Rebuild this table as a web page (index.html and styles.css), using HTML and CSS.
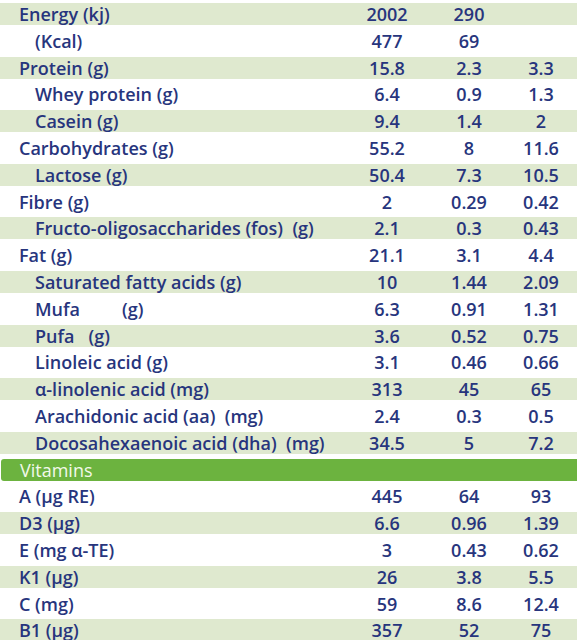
FILE: index.html
```html
<!DOCTYPE html>
<html lang="en">
<head>
    <meta charset="UTF-8">
    <meta name="viewport" content="width=device-width, initial-scale=1.0">
    <title>Nutrition facts</title>
    <link rel="stylesheet" href="styles.css">
</head>
<body>
    <div class="facts">
        <div class="row shade"><span class="name">Energy (kj)</span><span>2002</span><span>290</span><span></span></div>
        <div class="row sub"><span class="name">(Kcal)</span><span>477</span><span>69</span><span></span></div>
        <div class="row shade"><span class="name">Protein (g)</span><span>15.8</span><span>2.3</span><span>3.3</span></div>
        <div class="row sub"><span class="name">Whey protein (g)</span><span>6.4</span><span>0.9</span><span>1.3</span></div>
        <div class="row shade sub"><span class="name">Casein (g)</span><span>9.4</span><span>1.4</span><span>2</span></div>
        <div class="row"><span class="name">Carbohydrates (g)</span><span>55.2</span><span>8</span><span>11.6</span></div>
        <div class="row shade sub"><span class="name">Lactose (g)</span><span>50.4</span><span>7.3</span><span>10.5</span></div>
        <div class="row"><span class="name">Fibre (g)</span><span>2</span><span>0.29</span><span>0.42</span></div>
        <div class="row shade sub"><span class="name">Fructo-oligosaccharides (fos)  (g)</span><span>2.1</span><span>0.3</span><span>0.43</span></div>
        <div class="row"><span class="name">Fat (g)</span><span>21.1</span><span>3.1</span><span>4.4</span></div>
        <div class="row shade sub"><span class="name">Saturated fatty acids (g)</span><span>10</span><span>1.44</span><span>2.09</span></div>
        <div class="row sub"><span class="name">Mufa         (g)</span><span>6.3</span><span>0.91</span><span>1.31</span></div>
        <div class="row shade sub"><span class="name">Pufa   (g)</span><span>3.6</span><span>0.52</span><span>0.75</span></div>
        <div class="row sub"><span class="name">Linoleic acid (g)</span><span>3.1</span><span>0.46</span><span>0.66</span></div>
        <div class="row shade sub"><span class="name">α-linolenic acid (mg)</span><span>313</span><span>45</span><span>65</span></div>
        <div class="row sub"><span class="name">Arachidonic acid (aa)  (mg)</span><span>2.4</span><span>0.3</span><span>0.5</span></div>
        <div class="row shade sub"><span class="name">Docosahexaenoic acid (dha)  (mg)</span><span>34.5</span><span>5</span><span>7.2</span></div>
        <div class="row section"><span class="name">Vitamins</span></div>
        <div class="row"><span class="name">A (µg RE)</span><span>445</span><span>64</span><span>93</span></div>
        <div class="row shade"><span class="name">D3 (µg)</span><span>6.6</span><span>0.96</span><span>1.39</span></div>
        <div class="row"><span class="name">E (mg α-TE)</span><span>3</span><span>0.43</span><span>0.62</span></div>
        <div class="row shade"><span class="name">K1 (µg)</span><span>26</span><span>3.8</span><span>5.5</span></div>
        <div class="row"><span class="name">C (mg)</span><span>59</span><span>8.6</span><span>12.4</span></div>
        <div class="row shade"><span class="name">B1 (µg)</span><span>357</span><span>52</span><span>75</span></div>
    </div>
</body>
</html>
```

FILE: styles.css
```css
body {
    margin: 0;
    background: #fff;
    font-family: "Open Sans", "Noto Sans", sans-serif;
    color: #27357d;
}
.facts {
    padding-top: 3px;
}
.row {
    display: grid;
    grid-template-columns: 345px 84px 80px 64px;
    align-items: center;
    height: 22px;
    margin-bottom: 4.8px;
    font-size: 18px;
    font-weight: 550;
    line-height: 22px;
}
.row span {
    text-align: center;
}
.row .name {
    text-align: left;
    padding-left: 19px;
    white-space: pre;
}
.sub .name {
    padding-left: 35px;
}
.shade {
    background: #dfe9cf;
}
.section {
    background: #6cb33f;
    color: #f2f9ea;
    font-weight: 500;
    margin-left: 1px;
    border-radius: 3px 0 0 3px;
}
```
